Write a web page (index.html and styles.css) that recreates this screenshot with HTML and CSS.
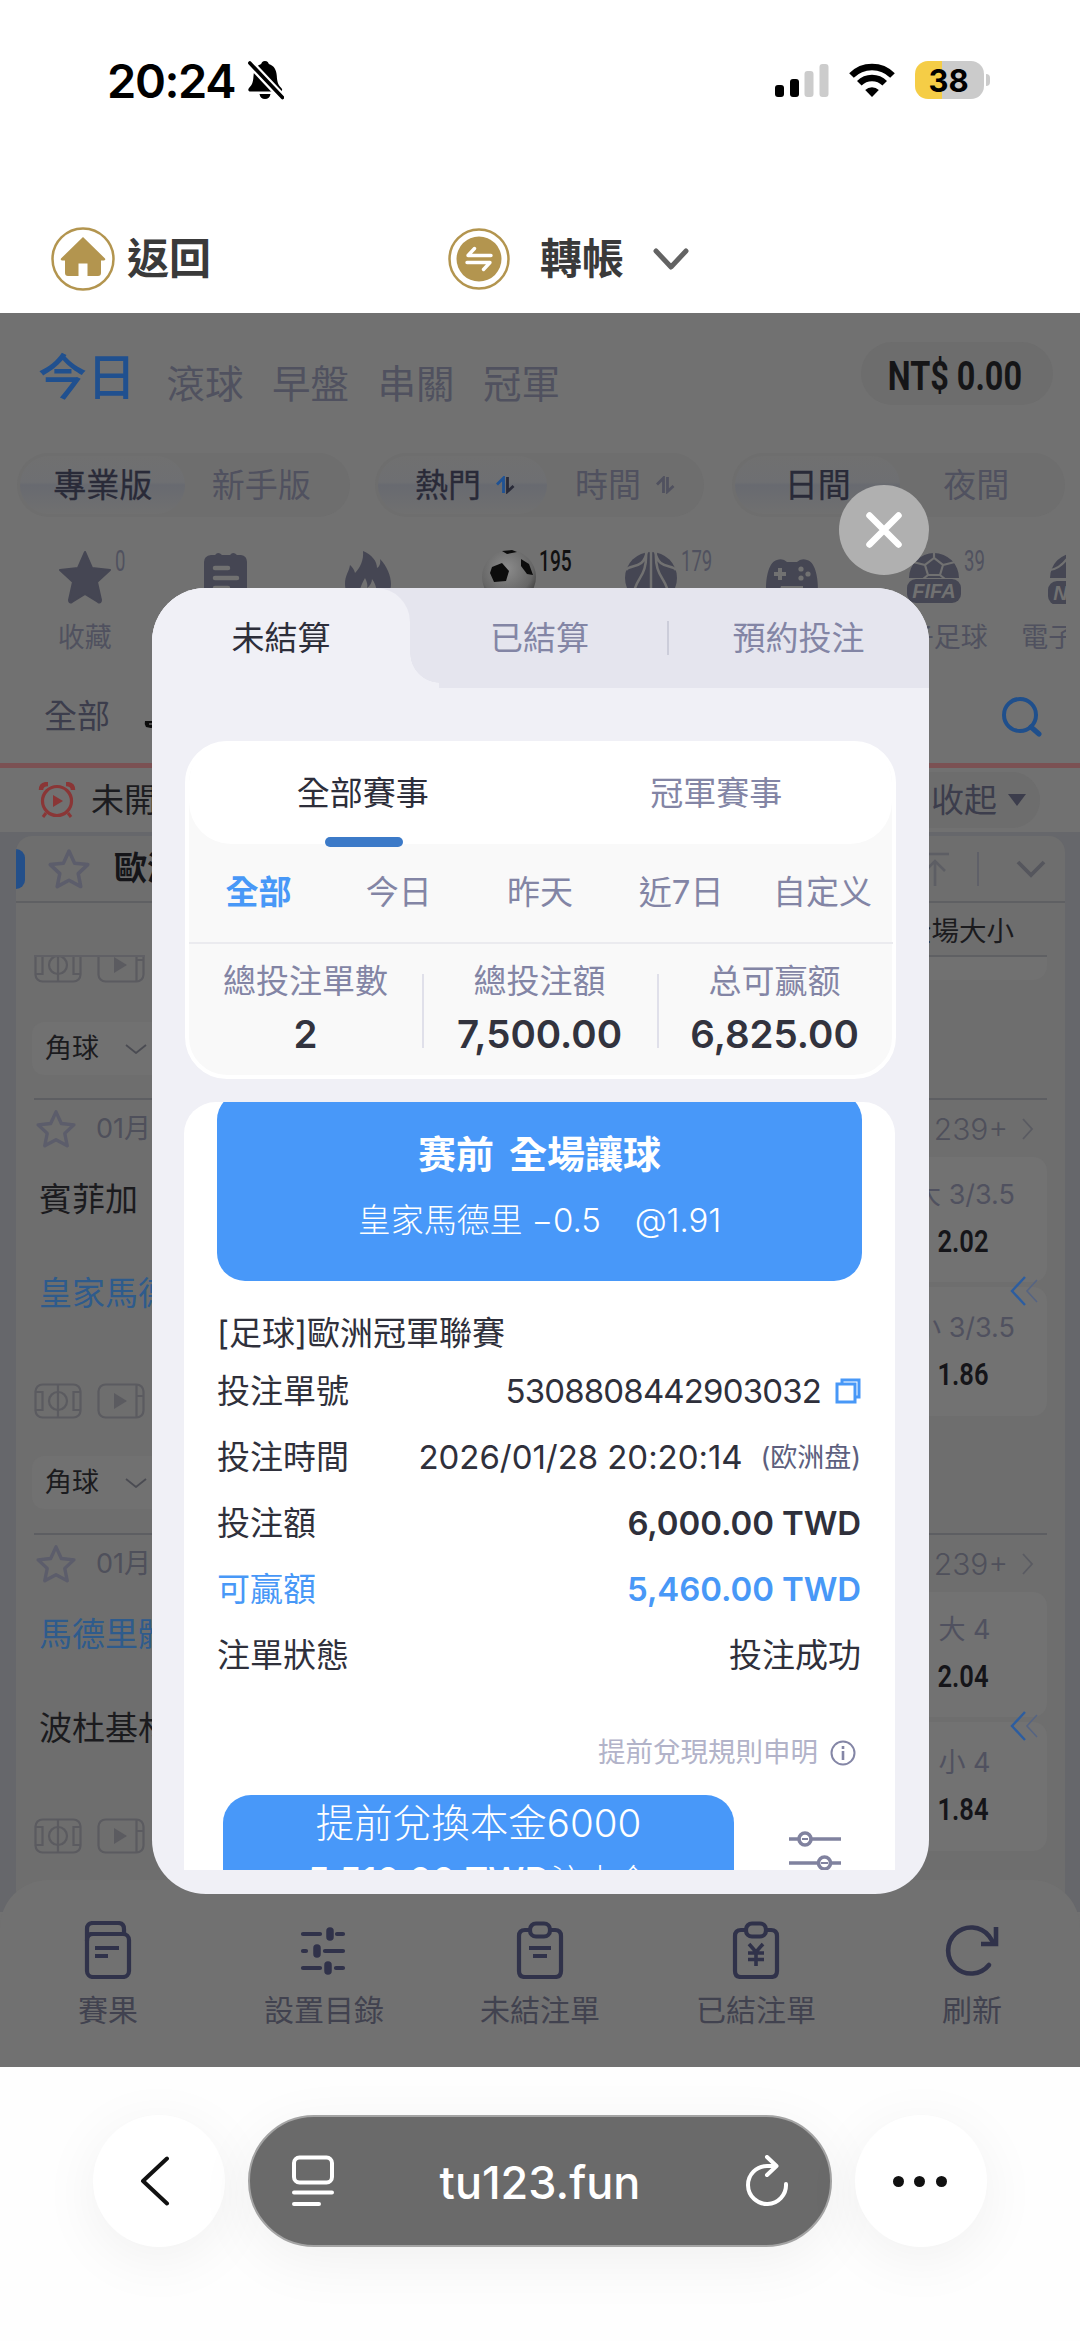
FILE: index.html
```html
<!DOCTYPE html>
<html lang="zh-Hant">
<head>
<meta charset="utf-8">
<title>tu123.fun</title>
<link rel="stylesheet" href="styles.css">
</head>
<body>
<svg width="0" height="0" class="defs">
  <defs>
    <symbol id="star-o" viewBox="0 0 46 42"><path d="M23 3l5.6 12.2 13.2 1.4-9.6 9 2.6 13L23 32.2 11.200 38.600l2.600-13-9.600-9 13.200-1.400z" fill="none" stroke="currentColor" stroke-width="3.500" stroke-linejoin="round"/></symbol>
    <symbol id="field" viewBox="0 0 48 36"><g fill="none" stroke="currentColor" stroke-width="2.200"><rect x="1.500" y="1.500" width="45" height="33" rx="7"/><path d="M24 1.500v33M2 9h6.500v18H2M46 9h-6.500v18H46"/><circle cx="24" cy="18" r="9"/></g></symbol>
    <symbol id="video" viewBox="0 0 48 36"><g fill="none" stroke="currentColor" stroke-width="2.200"><rect x="1.500" y="1.500" width="45" height="33" rx="7"/><path d="M39.500 2v32M39.500 13H46"/></g><path d="M17 10l13 8-13 8z" fill="currentColor"/></symbol>
    <symbol id="sort" viewBox="0 0 20 18"><path class="up" d="M8.500 17V2L2 8.500" fill="none" stroke-width="2.800"/><path d="M12.500 1v14.500L18.500 10" fill="none" stroke="currentColor" stroke-width="2.800"/></symbol>
    <symbol id="down" viewBox="0 0 22 10"><path d="M1 1l10 8 10-8" fill="none" stroke="currentColor" stroke-width="1.800"/></symbol>
    <symbol id="back2" viewBox="0 0 30 30"><path d="M15 1L2 15l13 14" fill="none" stroke="#2c5da0" stroke-width="2.400"/><path d="M27 4L17 15l10 11" fill="none" stroke="#566482" stroke-width="1.600"/></symbol>
  </defs>
</svg>

<header class="status">
  <div class="clock">20:24</div>
  <svg class="bell" viewBox="0 0 36 40"><path d="M17 1c2.500 0 3.500 1.500 3.800 3C26 5.500 28.500 10 28.800 16c.3 7 2 9.500 4.500 12 1.700 1.800.7 3.500-1.300 3.500H2.500c-2 0-3-1.700-1.500-3.500 2.500-2.500 4.200-5 4.500-12C5.800 10 8.300 5.500 13.200 4c.3-1.500 1.300-3 3.800-3zM11.500 34h11c-.5 3.200-2.500 5-5.500 5s-5-1.800-5.500-5z"/><path d="M0 1L37 40.500" stroke="#fff" stroke-width="8"/><path d="M1.800 3L34.500 37.500" stroke="#000" stroke-width="3.600" stroke-linecap="round"/></svg>
  <div class="status-right">
    <svg class="signal" viewBox="0 0 54 35"><rect x="0" y="22" width="9" height="12" rx="3"/><rect x="15" y="16" width="9" height="18" rx="3"/><rect x="29.500" y="8" width="9" height="26" rx="3" fill="#ccc"/><rect x="44.500" y="1" width="9" height="33" rx="3" fill="#ccc"/></svg>
    <svg class="wifi" viewBox="0 0 46 34"><g fill="none" stroke="#000" stroke-width="6.500"><path d="M2.500 12.500a29 29 0 0 1 41 0"/><path d="M10.300 20.300a18 18 0 0 1 25.400 0"/></g><path d="M23 34l-6.800-7a9.600 9.600 0 0 1 13.600 0z"/></svg>
    <div class="battery">38</div><i class="nub"></i>
  </div>
</header>

<nav class="topnav">
  <svg class="home" viewBox="0 0 64 64"><circle cx="32" cy="32" r="30.500" fill="none" stroke="#b3954f" stroke-width="2.500"/><path d="M32 10L10 31.500c-.6.800-.2 2 1 2h3V46c0 2 1 3 3 3h10.500V36.500h9V49H47c2 0 3-1 3-3V33.500h3c1.200 0 1.600-1.200 1-2z" fill="#b3954f"/></svg>
  <span class="nav-back">返回</span>
  <svg class="transfer" viewBox="0 0 62 62"><circle cx="31" cy="31" r="29.500" fill="none" stroke="#b3954f" stroke-width="2.500"/><circle cx="31" cy="31" r="22.500" fill="#b3954f"/><path d="M43 27.500H20l6.500-7M19 34.500h23l-6.500 7" fill="none" stroke="#fff" stroke-width="3.400" stroke-linecap="round" stroke-linejoin="round"/></svg>
  <span class="nav-transfer">轉帳</span>
  <svg class="nav-caret" viewBox="0 0 36 22"><path d="M3 3l15 16L33 3" fill="none" stroke="#636363" stroke-width="5" stroke-linecap="round" stroke-linejoin="round"/></svg>
</nav>

<main class="app">
  <div class="top">
    <div class="modes"><b>今日</b><span>滾球</span><span>早盤</span><span>串關</span><span>冠軍</span></div>
    <div class="wallet"><span class="cond">NT$ 0.00</span></div>
  </div>
  <div class="segments">
    <div class="seg"><span class="on">專業版</span><span>新手版</span></div>
    <div class="seg sorts"><span class="on">熱門<svg class="sort blue"><use href="#sort"/></svg></span><span>時間<svg class="sort"><use href="#sort"/></svg></span></div>
    <div class="seg"><span class="on">日間</span><span>夜間</span></div>
  </div>
  <div class="sports">
    <div class="sport"><svg viewBox="0 0 54 54"><path d="M27 2l7 16 18 2-13 12 4 18c0 2-1 3-3 2L27 44l-13 8c-2 1-3 0-3-2l4-18L2 20l18-2z" fill="#454653" stroke="#454653" stroke-width="2" stroke-linejoin="round"/></svg><sup class="cond">0</sup><p>收藏</p></div>
    <div class="sport"><svg viewBox="0 0 54 54"><path d="M12 5h4q3-4 7 0h8q3-4 7 0h4q6 1 6 7v42H5V12q0-6 7-7z" fill="#454653"/><path d="M16 18h13M16 28h22M16 38h13" stroke="#717171" stroke-width="4.500" stroke-linecap="round"/></svg></div>
    <div class="sport"><svg viewBox="0 0 54 54"><path d="M22 1c9 4 14 10 14 17 2-1 4-4 3-9 7 7 11 17 11 25 0 12-10 20-23 20S4 46 4 34C4 25 8 22 9 15c2 2 4 4 5 8 5-5 9-13 8-22z" fill="#454653"/><path d="M22 54c-6-10-3-17 2-26 2 4 3 7 2 10 3-2 5-6 5-9 6 8 6 17 0 25z" fill="#717171"/></svg></div>
    <div class="sport active"><svg viewBox="0 0 54 54"><defs><radialGradient id="ball" cx=".45" cy=".35" r=".7"><stop offset="0" stop-color="#8c8c8c"/><stop offset=".7" stop-color="#666"/><stop offset="1" stop-color="#333"/></radialGradient></defs><circle cx="27" cy="27" r="27" fill="url(#ball)"/><path d="M10 17l10-4 7 8-3 10-12 1-4-9zM39 9l8 5 4 11-6-1-6-8zM32 40l12-1 4 7-10 7zM20 1l10-1 5 2-10 2z" fill="#0c0c0c"/></svg><sup class="cond">195</sup></div>
    <div class="sport"><svg viewBox="0 0 54 54"><circle cx="27" cy="28" r="26" fill="#454653"/><path d="M27 1v54M23 1C20 20 6 14 2 20M31 1c3 19 17 13 21 19M22 1C24 30 8 28 10 50M32 1c-2 29 14 27 12 49" fill="none" stroke="#717171" stroke-width="2.500"/></svg><sup class="cond">179</sup></div>
    <div class="sport"><svg viewBox="0 0 54 54"><path d="M12 10q6-2 10 2h10q4-4 10-2c8 2 11 16 11 30v14H1V40C1 26 4 12 12 10z" fill="#454653"/><path d="M15 18v12M9 24h12" stroke="#717171" stroke-width="4"/><g fill="#717171"><circle cx="36" cy="19" r="2.600"/><circle cx="36" cy="28" r="2.600"/><circle cx="43" cy="24" r="2.600"/><path d="M16 36h22v10H13z"/></g></svg></div>
    <div class="sport"><svg viewBox="0 0 54 54"><path d="M2 28a25 25 0 0 1 50 0z" fill="#454653"/><path d="M27 8l-9 7 3 10h12l3-10zM27 8V2M18 15L6 12M36 15l12-3M21 25l-5 4M33 25l5 4" fill="none" stroke="#717171" stroke-width="2.200"/><rect x="0" y="29" width="54" height="24" rx="9" fill="#454653"/><text x="27" y="48" text-anchor="middle" class="fifa">FIFA</text></svg><sup class="cond">39</sup><p>電子足球</p></div>
    <div class="sport"><svg viewBox="0 0 54 54"><path d="M2 28a25 25 0 0 1 50 0z" fill="#454653"/><path d="M2 20q12-2 20-16M27 2v26" fill="none" stroke="#717171" stroke-width="2.200"/><rect x="0" y="31" width="54" height="24" rx="9" fill="#454653"/><text x="27" y="50" text-anchor="middle" class="fifa">NBA</text></svg><p>電子籃球</p></div>
  </div>
  <div class="leagues"><span>全部</span><svg class="trophy" viewBox="0 0 22 14"><path d="M2 1h20v12h-7q-2-6-7-5l-5-1q-2-3-1-6z" fill="#0c0c0c"/><path d="M6 4h6M15 5h7" stroke="#666" stroke-width="1.500"/></svg><svg class="search" viewBox="0 0 40 40"><circle cx="18" cy="18" r="16" fill="none" stroke="#1f4f8c" stroke-width="4"/><path d="M29 30l8 7" stroke="#1f4f8c" stroke-width="5" stroke-linecap="round"/></svg></div>
  <div class="upcoming">
    <svg class="alarm" viewBox="0 0 38 36"><g fill="none" stroke="#8a3636"><circle cx="19" cy="19" r="14.500" stroke-width="3.200"/><path d="M3 8q0-6 7-6M35 8q0-6-7-6" stroke-width="4.500"/><path d="M8 31l-3 4M30 31l3 4" stroke-width="3"/></g><path d="M15 13l10 6-10 6z" fill="#8a3636"/></svg>
    <span>未開賽</span>
    <div class="fold">收起<i></i></div>
  </div>
  <div class="board">
    <div class="sheet">
      <div class="league">
        <i class="mark"></i><svg class="lstar"><use href="#star-o"/></svg><b>歐洲冠軍</b>
        <div class="ltools"><svg class="totop" viewBox="0 0 30 34"><path d="M1 2h28M15 34V9M5 19L15 9l10 10" fill="none" stroke="#5d5e64" stroke-width="2.600"/></svg><i></i><svg class="lcaret" viewBox="0 0 30 18"><path d="M2 2l13 13L28 2" fill="none" stroke="#55565d" stroke-width="3.800"/></svg></div>
      </div>
      <div class="cols">全場大小</div>
      <div class="cut"><div class="media"><svg><use href="#field"/></svg><svg><use href="#video"/></svg></div><div class="cutbox"></div></div>
      <div class="corner"><span>角球</span><svg><use href="#down"/></svg></div>

      <section class="match">
        <div class="meta"><svg class="mstar"><use href="#star-o"/></svg><span>01月</span><em>239+<svg viewBox="0 0 12 22"><path d="M1 1l9 10L1 21" fill="none" stroke="#5a5b62" stroke-width="1.800"/></svg></em></div>
        <div class="mbody">
          <div class="teams"><p>賓菲加</p><p class="fav second">皇家馬德里</p><div class="media"><svg><use href="#field"/></svg><svg><use href="#video"/></svg></div></div>
          <div class="odds"><div class="odd"><span>大 3/3.5</span><b class="cond">2.02</b></div><div class="odd low"><span>小 3/3.5</span><b class="cond">1.86</b></div><svg class="swipe"><use href="#back2"/></svg></div>
        </div>
        <div class="corner"><span>角球</span><svg><use href="#down"/></svg></div>
      </section>
      <section class="match">
        <div class="meta"><svg class="mstar"><use href="#star-o"/></svg><span>01月</span><em>239+<svg viewBox="0 0 12 22"><path d="M1 1l9 10L1 21" fill="none" stroke="#5a5b62" stroke-width="1.800"/></svg></em></div>
        <div class="mbody">
          <div class="teams"><p class="fav">馬德里體育會</p><p class="second">波杜基林特</p><div class="media"><svg><use href="#field"/></svg><svg><use href="#video"/></svg></div></div>
          <div class="odds"><div class="odd"><span>大 4</span><b class="cond">2.04</b></div><div class="odd low"><span>小 4</span><b class="cond">1.84</b></div><svg class="swipe"><use href="#back2"/></svg></div>
        </div>
      </section>
    </div>
  </div>

  <footer class="tabbar">
    <div><svg viewBox="0 0 58 58"><g fill="none" stroke="#30324a" stroke-width="4.200" stroke-linejoin="round"><rect x="8" y="13" width="42" height="43" rx="6"/><path d="M8 20V8q0-6 6-6h25q6 0 6 6v5H12q-4 0-4 5"/></g><path d="M16 27h24M16 35h13" stroke="#30324a" stroke-width="4.200"/></svg>賽果</div>
    <div><svg viewBox="0 0 58 58"><g stroke="#30324a" stroke-width="4.200" stroke-linecap="round"><path d="M8 13h17M42 13h6M8 30h3M30 30h18M8 47h17M41 47h7"/><path stroke-width="7.500" d="M35 10v6M22 27v6M33 44v6"/></g></svg>設置目錄</div>
    <div><svg viewBox="0 0 58 58"><g fill="none" stroke="#30324a" stroke-width="4.200"><path d="M20 9h-6q-6 0-6 6v35q0 6 6 6h30q6 0 6-6V15q0-6-6-6h-6"/><rect x="19" y="2.500" width="20" height="13" rx="6"/><path d="M18 27h22M22 35h14"/></g></svg>未結注單</div>
    <div><svg viewBox="0 0 58 58"><g fill="none" stroke="#30324a" stroke-width="4.200"><path d="M20 9h-6q-6 0-6 6v35q0 6 6 6h30q6 0 6-6V15q0-6-6-6h-6"/><rect x="19" y="2.500" width="20" height="13" rx="6"/><path d="M22 23l7 8 7-8M29 31v14M21 32h16M21 38.500h16" stroke-width="3.600"/></g></svg>已結注單</div>
    <div><svg viewBox="0 0 58 58"><path d="M46 44a23 23 0 1 1 0-29l4 6" fill="none" stroke="#30324a" stroke-width="4.600" stroke-linecap="round"/><path d="M53 6v17H38" fill="none" stroke="#30324a" stroke-width="4.600"/></svg>刷新</div>
  </footer>

  <div class="modal">
    <div class="mtabs"><span class="cur">未結算</span><span>已結算</span><i></i><span>預約投注</span></div>
    <div class="summary">
      <div class="kinds"><span class="cur">全部賽事</span><span>冠軍賽事</span></div>
      <div class="days"><b>全部</b><span>今日</span><span>昨天</span><span>近7日</span><span>自定义</span></div>
      <div class="totals">
        <div><span>總投注單數</span><b>2</b></div>
        <div><span>總投注額</span><b>7,500.00</b></div>
        <div><span>总可赢额</span><b>6,825.00</b></div>
      </div>
    </div>
    <div class="bets">
      <div class="pick"><h2>赛前 全場讓球</h2><p>皇家馬德里 −0.5<span>@1.91</span></p></div>
      <h3>[足球]歐洲冠軍聯賽</h3>
      <dl>
        <div><dt>投注單號</dt><dd class="num">5308808442903032<svg viewBox="0 0 26 26"><g fill="none" stroke="#4898f7" stroke-width="3"><path d="M7 5V2h17v17h-4"/><rect x="2" y="6" width="18" height="18"/></g></svg></dd></div>
        <div><dt>投注時間</dt><dd class="date">2026/01/28 20:20:14<small>(欧洲盘)</small></dd></div>
        <div><dt>投注額</dt><dd class="money">6,000.00 TWD</dd></div>
        <div class="win"><dt>可贏額</dt><dd class="money">5,460.00 TWD</dd></div>
        <div><dt>注單狀態</dt><dd>投注成功</dd></div>
      </dl>
      <div class="rule">提前兌現規則申明<svg viewBox="0 0 26 26"><circle cx="13" cy="13" r="11.500" fill="none" stroke="#8486a6" stroke-width="2"/><path d="M13 11v9M13 6v3" stroke="#8486a6" stroke-width="2.600"/></svg></div>
      <div class="cash">
        <div class="cashbtn"><span>提前兌換本金6000</span><div class="sub">5,510.00 TWD<small>注本金</small></div></div>
        <svg class="tune" viewBox="0 0 52 56"><g fill="none" stroke="#80829f" stroke-width="3.600"><path d="M0 8h9M22 8h30M0 32h28M42 32h10"/><circle cx="16" cy="8" r="6"/><circle cx="35.500" cy="32" r="6"/></g><path d="M13 8h6M32 32h7" stroke="#80829f" stroke-width="2"/></svg>
      </div>
    </div>
    <button class="close" aria-label="close"><svg viewBox="0 0 36 36"><path d="M3.500 3.500l29 29M32.500 3.500l-29 29" stroke="#fff" stroke-width="6.500" stroke-linecap="round"/></svg></button>
  </div>
</main>

<footer class="browser">
  <div class="round"><svg viewBox="0 0 30 50" width="30" height="50"><path d="M27 2.500L3 25l24 22.500" fill="none" stroke="#111" stroke-width="4" stroke-linecap="round" stroke-linejoin="round"/></svg></div>
  <div class="address">
    <svg viewBox="0 0 44 52" width="44" height="52"><g fill="none" stroke="#fff" stroke-width="4" stroke-linecap="round"><rect x="3" y="2.500" width="38" height="25" rx="5.500"/><path d="M3 37.500h38M3 49h25"/></g></svg>
    <span>tu123.fun</span>
    <svg viewBox="0 0 44 52" width="44" height="52"><path d="M41 29a19 19 0 1 1-19-18h9M22 2l9.500 9L22 20" fill="none" stroke="#fff" stroke-width="4" stroke-linecap="round" stroke-linejoin="round"/></svg>
  </div>
  <div class="round dots"><i></i><i></i><i></i></div>
</footer>
</body>
</html>
```

FILE: styles.css
```css
* { box-sizing: border-box; margin: 0; padding: 0; }
body { width: 1080px; height: 2341px; overflow: hidden; background: #fff; color: #000; display: flex; flex-direction: column; font-family: Inter, "Noto Sans CJK TC", "Noto Sans CJK SC", sans-serif; line-height: 1; }
svg { display: block; flex: none; }
i, em { font-style: normal; display: block; }
span, b, p { white-space: nowrap; }
.defs { position: absolute; }
.cond { display: inline-block; font-family: Roboto, sans-serif; transform: scaleX(.8); }

.status { height: 160px; display: flex; align-items: center; padding-left: 107px; padding-right: 90px; }
.clock { font-size: 47px; font-weight: 600; letter-spacing: -1.400px; width: 141px; }
.bell { width: 36px; height: 40px; }
.status-right { margin-left: auto; display: flex; align-items: center; }
.signal { width: 54px; height: 35px; margin-right: 20px; }
.wifi { width: 46px; height: 34px; margin-right: 20px; }
.battery { width: 69px; height: 38px; border-radius: 13px; background: linear-gradient(90deg, #f5cd46 27px, #cbcbcb 27px); font-size: 31px; font-weight: 700; display: flex; align-items: center; justify-content: center; padding-right: 2px; }
.nub { width: 4px; height: 12px; margin-left: 2px; border-radius: 0 4px 4px 0; background: #cbcbcb; }

.topnav { height: 153px; padding: 45px 0 0 51px; display: flex; align-items: center; font-size: 42px; font-weight: 700; color: #3a3a3a; }
.home { width: 64px; height: 64px; }
.nav-back { margin-left: 12px; width: 321px; }
.transfer { width: 62px; height: 62px; }
.nav-transfer { margin-left: 30px; width: 113px; }
.nav-caret { width: 36px; height: 22px; }

.app { position: relative; height: 1754px; background: #717171; color: #50515f; display: flex; flex-direction: column; }
.top { height: 124px; display: flex; justify-content: space-between; }
.modes { display: flex; align-items: flex-end; height: 90px; padding-left: 38px; font-size: 38.500px; gap: 28.500px; }
.modes b { font-size: 49px; font-weight: 500; color: #20508f; margin-right: 2px; line-height: 51px; }
.wallet { margin: 29px 27px 0 0; width: 192px; height: 63px; border-radius: 32px; background: #6d6d6d; display: flex; align-items: center; justify-content: center; font-size: 40px; font-weight: 700; color: #151517; }
.wallet .cond { flex: none; transform: scaleX(.81); padding-top: 6px; margin-right: 5px; }
.segments { height: 96px; padding: 16px 15px 16px 17px; display: flex; justify-content: space-between; }
.seg { height: 64px; width: 333px; border-radius: 32px; background: #6e6e6e; display: flex; padding: 3px 13px 3px 3px; font-size: 33px; }
.seg span { flex: 153 0 0; display: flex; align-items: center; justify-content: center; border-radius: 29px; }
.seg .on { flex-grow: 167; color: #292a38; -webkit-text-stroke: .3px; background: linear-gradient(#707070, #6e6f72 45%, #686a70 50%, #707070); }
.sorts { width: 329px; margin-right: 4px; padding-right: 3px; }
.sorts .on { padding-left: 5px; }
.sorts span { padding-left: 2px; }
.sort { width: 20px; height: 18px; margin-left: 14px; stroke: #50515f; }
.sort.blue { stroke: #1f5294; }
.sports { height: 127px; margin-left: 14px; width: 1052px; padding-top: 17px; display: flex; overflow: hidden; }
.sport { flex: none; width: 141.500px; position: relative; display: flex; flex-direction: column; align-items: center; }
.sport svg { width: 54px; height: 54px; }
.sport sup { position: absolute; left: 101px; top: -3px; font-size: 29px; line-height: 29px; transform-origin: left; transform: scaleX(.64); }
.sport.active sup { color: #111; font-weight: 500; left: 100px; transform: scaleX(.66); }
.sport p { font-size: 27px; margin-top: 20px; }
.fifa { font: italic 700 20px "Liberation Sans", sans-serif; fill: #717171; }
.leagues { height: 103px; padding: 10px 38px 0 44px; display: flex; align-items: center; font-size: 33px; color: #3c3d4c; }
.trophy { width: 22px; height: 14px; margin: 20px 0 0 33px; }
.search { width: 40px; height: 40px; margin-left: auto; }
.upcoming { height: 69px; border-top: 5px solid #7b5153; display: flex; align-items: center; padding: 0 40px 0 38px; font-size: 33px; color: #1c1c20; }
.alarm { width: 38px; height: 36px; margin-right: 15px; }
.fold { margin-left: auto; height: 56px; width: 144px; border-radius: 28px; background: #6d6d6d; display: flex; align-items: center; justify-content: flex-end; padding-right: 14px; color: #3c3d4c; }
.fold i { margin-left: 11px; border: 9.500px solid transparent; border-top: 12px solid #3c3d4c; border-bottom: 0; }
.board { flex: none; height: 1080px; background: #66676b; padding: 4px 15px 0 16px; }
.sheet { height: 1060px; background: #6e6e6e; border-radius: 16px 16px 0 0; overflow: hidden; }
.league { height: 67px; border-bottom: 2px solid #5f6063; display: flex; align-items: center; }
.mark { width: 9px; height: 40px; border-radius: 0 12px 12px 0; background: #234f8a; }
.lstar { width: 46px; height: 42px; color: #5c5d6b; margin: 0 22px 0 21px; }
.league b { font-size: 33px; color: #151519; }
.ltools { margin-left: auto; display: flex; align-items: center; padding-right: 19px; }
.totop { width: 30px; height: 34px; margin-right: 27px; }
.ltools i { width: 2px; height: 34px; background: #5f6068; margin-right: 37px; }
.lcaret { width: 30px; height: 18px; }
.cols { height: 52px; padding: 5px 51px 0 0; display: flex; align-items: center; justify-content: flex-end; font-size: 27.500px; color: #1b1b1e; }
.cut { height: 67px; display: flex; justify-content: space-between; align-items: flex-start; padding: 0 18px; }
.cut .media { overflow: hidden; height: 28px; align-items: flex-end; border-top: 2px solid #606065; }
.cutbox { width: 320px; height: 25px; border-top: 2px solid #5f6063; background: #717171; border-radius: 0 0 14px 14px; }
.media { display: flex; gap: 15px; height: 36px; color: #5b5b60; }
.media svg { width: 48px; height: 36px; }
.corner { width: 220px; height: 53px; margin: 0 0 23px 16px; border-radius: 12px; background: #717171; display: flex; align-items: center; padding-left: 13px; font-size: 27px; color: #1b1b1e; }
.corner svg { width: 22px; height: 10px; margin-left: 26px; color: #4a4b52; }
.match { height: 435px; padding: 0 18px; }
.meta { height: 59px; border-top: 2px solid #5d5e62; display: flex; align-items: center; font-size: 27px; color: #4f505b; }
.mstar { width: 44px; height: 40px; color: #5c5d6b; margin-right: 18px; }
.meta em { margin-left: auto; display: flex; align-items: center; font-size: 30px; font-weight: 300; padding-right: 13px; }
.meta em svg { width: 12px; height: 22px; margin-left: 14px; }
.mbody { height: 262px; display: flex; justify-content: space-between; }
.teams p { font-size: 33px; line-height: 85px; height: 84px; padding-left: 5px; color: #1b1b1e; }
.teams .second { line-height: 105px; height: 104px; }
.teams p.fav { color: #2e5b8c; }
.teams .media { margin-top: 38px; }
.odds { position: relative; width: 163px; }
.odd { height: 125px; border-radius: 0 14px 14px 0; background: #727272; display: flex; flex-direction: column; align-items: center; padding: 24px 0 0; font-size: 27px; color: #50515f; font-weight: 400; margin-bottom: 5px; }
.odd.low { height: 129px; padding-top: 27px; }
.odd b { font-size: 32px; font-weight: 600; color: #151519; margin-top: 17px; margin-left: -5px; }
.odd span { margin-left: -2px; }
.swipe { position: absolute; left: 126px; top: 119px; width: 30px; height: 30px; }
.match .corner { margin-left: -2px; margin-top: 37px; }
.tabbar { position: absolute; left: 0; right: 0; bottom: 0; height: 187px; border-radius: 48px 48px 0 0; background: #717171; display: flex; padding-top: 41px; font-size: 30px; color: #41424f; }
.tabbar div { flex: 1; display: flex; flex-direction: column; align-items: center; }
.tabbar svg { width: 58px; height: 58px; margin-bottom: 16px; }

.modal { position: absolute; left: 152px; top: 275px; width: 777px; height: 1306px; border-radius: 54px; background: #f0f0f6; color: #8385a5; font-size: 33px; }
.mtabs { height: 100px; border-radius: 54px 54px 0 0; background: radial-gradient(circle at 100% 0, transparent 29.500px, #f0f0f6 30px) 258px 65px / 30px 30px no-repeat, linear-gradient(#f0f0f6, #f0f0f6) 0 95px / 287px 5px no-repeat, #e5e5ee; display: flex; align-items: center; }
.mtabs span { width: 259px; height: 100px; display: flex; align-items: center; justify-content: center; }
.mtabs .cur { width: 258px; border-radius: 54px 34px 0 0; background: #f0f0f6; color: #2d2e3a; }
.mtabs i { width: 2px; height: 34px; margin: 0 0 0 -2px; background: #cccdda; }
.summary { margin: 53px 33px 0; height: 338px; border: 4px solid #fff; border-radius: 42px; background: #f9f9f9; }
.kinds { margin: -4px 0 0; height: 103px; padding-top: 1px; border-radius: 42px; background: #fff; display: flex; }
.kinds span { flex: 1; display: flex; align-items: center; justify-content: center; position: relative; }
.kinds .cur { color: #2d2e3a; left: -2px; }
.kinds .cur::after { content: ""; position: absolute; left: 138px; bottom: -3px; width: 78px; height: 10px; border-radius: 5px; background: #3c7ac8; }
.days { height: 100px; padding-bottom: 1px; border-bottom: 2px solid #ebebef; display: grid; grid-template-columns: 139px repeat(4, 1fr); margin-right: -1px; align-items: center; justify-items: center; }
.days b { color: #4898f7; }
.totals { display: grid; grid-template-columns: 233px 235px 1fr; padding-top: 21px; }
.totals div { display: flex; flex-direction: column; align-items: center; position: relative; gap: 17px; }
.totals b { font-size: 38.500px; font-weight: 600; color: #32333e; }
.totals div + div { background: linear-gradient(#e0e0ea, #e0e0ea) 0 9px / 2px 74px no-repeat; }
.bets { margin: 23px 34px 0 32px; height: 768px; border-radius: 32px 32px 0 0; background: #fff; overflow: hidden; color: #2f303b; padding: 0 33px; }
.pick { margin-top: -10px; height: 189px; border-radius: 28px; background: #4898f9; color: #fff; text-align: center; padding-top: 43px; }
.pick h2 { font-size: 38px; font-weight: 700; line-height: 38px; word-spacing: 6px; }
.pick p { margin-top: 31px; font-weight: 300; letter-spacing: -.1px; }
.pick span { margin-left: 34px; }
.bets h3 { font-size: 33px; font-weight: 400; margin-top: 36px; line-height: 33px; }
dl { margin-top: 8px; padding-right: 1px; }
dl div { height: 66px; display: flex; align-items: center; justify-content: space-between; }
dd { display: flex; align-items: center; }
.num { letter-spacing: -.850px; }
.num svg { width: 26px; height: 26px; margin-left: 14px; }
.date { letter-spacing: -.050px; }
.date small { font-size: 27px; margin-left: 18px; color: #5d5f7e; }
.money { font-weight: 600; letter-spacing: -.1px; }
.win { color: #4898f7; }
.rule { margin-top: 52px; height: 26px; display: flex; align-items: center; justify-content: flex-end; padding-right: 6px; font-size: 27.500px; color: #b2b3c9; }
.rule svg { width: 26px; height: 26px; margin-left: 12px; }
.cash { margin: 29px 0 0 6px; display: flex; }
.cashbtn { flex: none; width: 511px; height: 116px; border-radius: 28px; background: #4898f9; color: #fff; display: flex; flex-direction: column; align-items: center; padding-top: 9px; font-size: 38.500px; font-weight: 300; }
.sub { font-size: 36px; line-height: 36px; margin-top: 19px; font-weight: 500; display: flex; align-items: flex-start; white-space: nowrap; }
.sub small { font-size: 33px; line-height: 33px; font-weight: 300; padding-top: 3px; }
.tune { width: 52px; height: 56px; margin: 36px 0 0 55px; }
.close { position: absolute; right: 0; top: -103px; width: 90px; height: 90px; border: 0; border-radius: 50%; background: #b0b0b0; display: flex; align-items: center; justify-content: center; }
.close svg { width: 36px; height: 36px; }

.browser { height: 274px; padding: 48px 93px 94px; display: flex; justify-content: space-between; background: #fefefe; overflow: hidden; }
.round { width: 132px; height: 132px; border-radius: 50%; background: #fff; box-shadow: 0 12px 60px rgba(0,0,0,.06); display: flex; align-items: center; justify-content: center; gap: 10.500px; }
.round > svg { margin-right: 9px; }
.round i { width: 11px; height: 11px; border-radius: 50%; background: #111; }
.dots { padding-right: 3px; }
.address { width: 584px; height: 132px; border-radius: 66px; background: #6a6a6a; border: 2px solid #a4a4a4; box-shadow: 0 14px 60px rgba(0,0,0,.06); display: flex; align-items: center; justify-content: space-between; padding: 0 41px; color: #fff; font-size: 45px; font-weight: 500; }
.address span { padding-top: 3px; }
```
